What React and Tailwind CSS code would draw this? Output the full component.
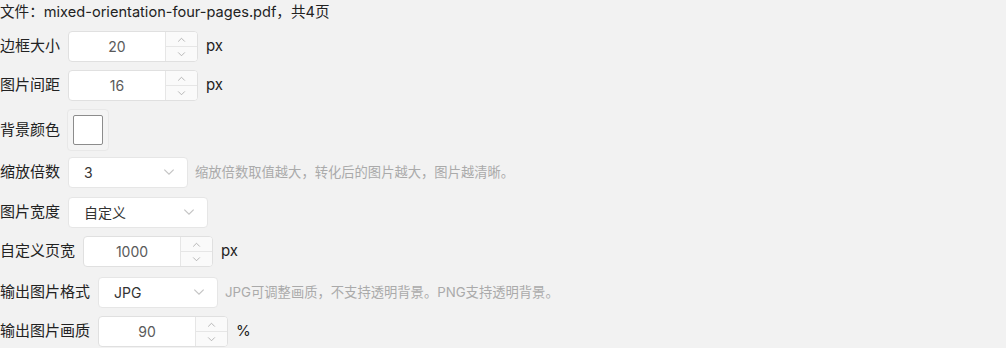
import React from 'react';

const FONT = { fontFamily: 'Inter, "Noto Sans CJK SC", sans-serif' };

function ChevronUp({ className }) {
  return (
    <svg viewBox="0 0 10 6" className={className} fill="none" stroke="currentColor" strokeWidth="1">
      <path d="M1 5.5 L5 1.5 L9 5.5" />
    </svg>
  );
}

function ChevronDown({ className }) {
  return (
    <svg viewBox="0 0 10 6" className={className} fill="none" stroke="currentColor" strokeWidth="1">
      <path d="M1 0.5 L5 4.5 L9 0.5" />
    </svg>
  );
}

function Label({ children }) {
  return <span className="text-[15px] text-[#222] mr-[8px] whitespace-nowrap">{children}</span>;
}

function NumberInput({ value }) {
  return (
    <div className="flex w-[130px] h-[31px] bg-white border border-[#e0e0e0] rounded-[4px] overflow-hidden">
      <div className="flex-1 flex items-center justify-center text-[14px] text-[#5a5a5a]">{value}</div>
      <div className="w-[32px] flex flex-col border-l border-[#e6e6e6] bg-[#fafafa]">
        <div className="flex-1 flex items-center justify-center border-b border-[#e6e6e6] text-[#aaa]">
          <ChevronUp className="w-[9px] h-[5px]" />
        </div>
        <div className="flex-1 flex items-center justify-center text-[#aaa]">
          <ChevronDown className="w-[9px] h-[5px]" />
        </div>
      </div>
    </div>
  );
}

function Select({ value, width }) {
  return (
    <div className={`flex items-center justify-between h-[31px] bg-white border border-[#e6e6e6] rounded-[4px] pl-[15px] pr-[12px] ${width}`}>
      <span className="text-[14px] text-[#333]">{value}</span>
      <ChevronDown className="w-[12px] h-[7px] text-[#c4c4c4]" />
    </div>
  );
}

function Hint({ children }) {
  return <span className="ml-[7px] text-[13.3px] text-[#aaa] whitespace-nowrap">{children}</span>;
}

function Unit({ children }) {
  return <span className="ml-[8px] text-[15px] text-[#222]">{children}</span>;
}

export default function App() {
  return (
    <div className="w-[1006px] h-[348px] bg-[#f2f2f2] overflow-hidden" style={FONT}>
      <div className="h-[26px] flex items-center text-[14.6px] text-[#222] whitespace-nowrap">
        文件：mixed-orientation-four-pages.pdf，共4页
      </div>

      <div className="mt-[5px] h-[31px] flex items-center">
        <Label>边框大小</Label>
        <NumberInput value="20" />
        <Unit>px</Unit>
      </div>

      <div className="mt-[8px] h-[31px] flex items-center">
        <Label>图片间距</Label>
        <NumberInput value="16" />
        <Unit>px</Unit>
      </div>

      <div className="mt-[8px] h-[42px] flex items-center">
        <Label>背景颜色</Label>
        <div className="w-[42px] h-[42px] -ml-[1px] flex items-center justify-center border border-[#e8e8e8] rounded-[4px] bg-[#f4f4f4]">
          <div className="w-[30px] h-[30px] bg-white border border-[#8c8c8c] rounded-[2px]" />
        </div>
      </div>

      <div className="mt-[6px] h-[31px] flex items-center">
        <Label>缩放倍数</Label>
        <Select value="3" width="w-[120px]" />
        <Hint>缩放倍数取值越大，转化后的图片越大，图片越清晰。</Hint>
      </div>

      <div className="mt-[9px] h-[31px] flex items-center">
        <Label>图片宽度</Label>
        <Select value="自定义" width="w-[140px]" />
      </div>

      <div className="mt-[8px] h-[31px] flex items-center">
        <Label>自定义页宽</Label>
        <NumberInput value="1000" />
        <Unit>px</Unit>
      </div>

      <div className="mt-[10px] h-[31px] flex items-center">
        <Label>输出图片格式</Label>
        <Select value="JPG" width="w-[120px]" />
        <Hint>JPG可调整画质，不支持透明背景。PNG支持透明背景。</Hint>
      </div>

      <div className="mt-[8px] h-[31px] flex items-center">
        <Label>输出图片画质</Label>
        <NumberInput value="90" />
        <Unit>%</Unit>
      </div>
    </div>
  );
}
